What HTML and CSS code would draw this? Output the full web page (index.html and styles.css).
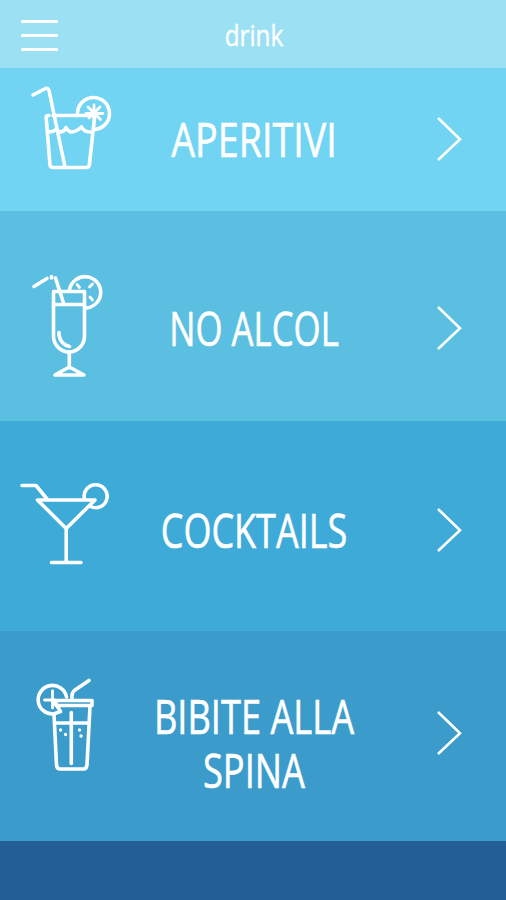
FILE: index.html
```html
<!DOCTYPE html>
<html lang="it">
<head>
    <meta charset="UTF-8">
    <meta name="viewport" content="width=device-width, initial-scale=1.0">
    <title>drink</title>
    <link rel="stylesheet" href="styles.css">
</head>
<body>
    <header class="topbar">
        <button class="menu-button" aria-label="Menu">
            <span></span>
            <span></span>
            <span></span>
        </button>
        <h1 class="page-title">drink</h1>
    </header>

    <main class="menu">
        <a class="item aperitivi" href="#">
            <svg class="icon" width="100" height="105" viewBox="0 0 100 105">
                <path d="M18 20 30.5 13.5Q33 12.5 34 15.5L50 92"/>
                <path d="M34 40.5H33Q31 40.5 31.2 43L35 90Q35.3 92.5 38 92.5H71Q74 92.5 74.3 90L79.500 43Q79.500 40.5 77.500 40.5H38"/>
                <path d="M33 56.5Q38 57.5 41 54.5M44 56.5Q49 58 51 52.5 53 56.5 56 57 61 57 66.500 52 69 57 75 57"/>
                <path d="M62.500 38A16 16 0 1 1 78.500 54.5"/>
                <path class="thin" d="M79 30v15M71 38.5h17M73 32 85.5 44.5M85 32 74 43"/>
            </svg>
            <span class="label">APERITIVI</span>
            <svg class="arrow" width="28" height="46" viewBox="0 0 28 46"><path d="M2 2 24 23.2 2 44"/></svg>
        </a>

        <a class="item no-alcol" href="#">
            <svg class="icon" width="100" height="120" viewBox="0 0 100 120">
                <path d="M19 21.5 32 13.5"/>
                <path d="M36.500 11.500v1.500"/>
                <path d="M40.5 13 48.500 38"/>
                <path d="M38.5 26.500H69.500V71A15.500 16 0 0 1 38.5 71ZM38.5 39.5H69.500"/>
                <path d="M44 67.500V70Q45.500 79.500 54.500 81.500"/>
                <path d="M54.3 87V103M40 110H69L54.3 102Z"/>
                <path d="M54.500 25A15.700 15.700 0 1 1 71 43"/>
                <path class="thin" d="M62 19.500 64.500 22.500M74.5 22 77.5 19M75 32 77.5 35"/>
            </svg>
            <span class="label">NO ALCOL</span>
            <svg class="arrow" width="28" height="46" viewBox="0 0 28 46"><path d="M2 2 24 23.2 2 44"/></svg>
        </a>

        <a class="item cocktails" href="#">
            <svg class="icon" width="100" height="100" viewBox="0 0 100 100">
                <path d="M12 10.5H26L37 24"/>
                <path d="M27.5 25H85L56.2 53.5ZM56.2 53.5V87M41.500 87.5H71"/>
                <path d="M74.500 24A11.500 11.500 0 1 1 80.500 31.500"/>
            </svg>
            <span class="label">COCKTAILS</span>
            <svg class="arrow" width="28" height="46" viewBox="0 0 28 46"><path d="M2 2 24 23.2 2 44"/></svg>
        </a>

        <a class="item bibite" href="#">
            <svg class="icon" width="100" height="110" viewBox="0 0 100 110">
                <path d="M46.500 27A14.300 14.300 0 1 0 33.5 44L40.500 41.5 34 31"/>
                <path class="thin" d="M24.500 30H35M32.5 21V38"/>
                <path d="M36 30.5H72V35.500H36ZM52 30V26Q52 22 55 20L69 10.5"/>
                <path d="M34 44 36.5 95Q37 99 40 99H63.5Q66.5 99 67 95L70 36M35.5 53H69"/>
                <path d="M51.3 42.500V93.500"/>
                <path class="dots" d="M40.5 60h.1M45.5 64.5h.1M59.5 60h.1M61 66h.1"/>
            </svg>
            <span class="label">BIBITE ALLA<br>SPINA</span>
            <svg class="arrow" width="28" height="46" viewBox="0 0 28 46"><path d="M2 2 24 23.2 2 44"/></svg>
        </a>
    </main>

    <footer class="bottom"></footer>
</body>
</html>
```
FILE: styles.css
```css
* {
    margin: 0;
    padding: 0;
    box-sizing: border-box;
}

body {
    font-family: 'Open Sans', 'Noto Sans', sans-serif;
    color: #fff;
    background: #235f96;
    height: 100vh;
    display: flex;
    flex-direction: column;
}

.topbar {
    height: 68px;
    background: #9be1f3;
    display: grid;
    grid-template-columns: 120px 268px 118px;
    align-items: center;
}

.menu-button {
    width: 37px;
    margin: 3px 0 0 20.5px;
    display: flex;
    flex-direction: column;
    gap: 11px;
    border: none;
    background: none;
    cursor: pointer;
}

.menu-button span {
    height: 2.7px;
    background: #fff;
    border-radius: 1px;
}

.page-title {
    font-size: 30px;
    font-weight: 400;
    text-align: center;
    -webkit-text-stroke: 0.4px #fff;
    transform: scaleX(0.81);
}

.item {
    height: 210px;
    display: grid;
    grid-template-columns: 120px 268px 118px;
    align-items: center;
    color: #fff;
    text-decoration: none;
}

.label {
    font-size: 48px;
    line-height: 54px;
    text-align: center;
    white-space: nowrap;
    -webkit-text-stroke: 0.6px #fff;
    transform: scaleX(0.75);
}

.icon,
.arrow {
    fill: none;
    stroke: #fff;
    stroke-width: 3.6;
    stroke-linecap: round;
    stroke-linejoin: round;
}

.icon {
    align-self: start;
}

.icon .thin {
    stroke-width: 2.8;
}

.icon .dots {
    stroke-width: 3.3;
}

.arrow {
    margin-left: 48px;
    stroke-width: 2.6;
    stroke-linecap: butt;
    stroke-linejoin: miter;
}

.aperitivi {
    height: 143px;
    background: #71d4f3;
    padding-bottom: 1px;
}

.aperitivi .icon {
    margin: 7px 0 0 15px;
}

.aperitivi .label {
    transform: scaleX(0.785);
}

.no-alcol {
    background: #5abfe1;
    padding-top: 23px;
}

.no-alcol .icon {
    margin: 31px 0 0 15px;
}

.no-alcol .label {
    transform: scaleX(0.725);
}

.cocktails {
    background: #3eaad8;
    padding-top: 8px;
}

.cocktails .icon {
    margin: 46px 0 0 10px;
}

.bibite {
    background: #3b9ccb;
    padding-bottom: 6px;
}

.bibite .icon {
    margin: 39px 0 0 20px;
}

.bibite .label {
    padding-top: 19px;
    transform: scaleX(0.755);
}

.bottom {
    flex: 1;
    background: #235f96;
}
```
